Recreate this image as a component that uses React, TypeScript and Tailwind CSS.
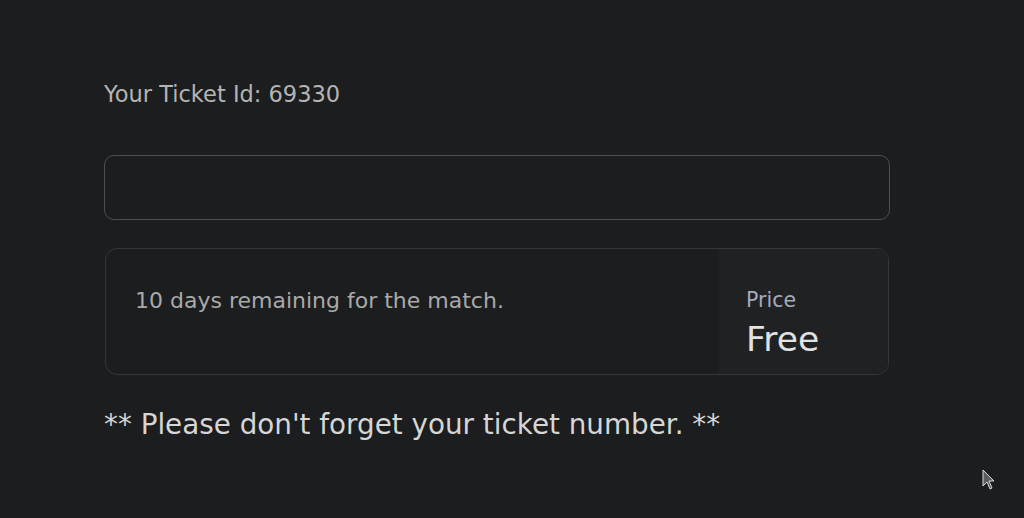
export default function App() {
  return (
    <div className="relative min-h-[518px] w-full bg-[#1b1d1e] font-['DejaVu_Sans',sans-serif]">
      <main className="w-[786px] ml-[104px] pt-[80px]">
        <p className="text-[22.5px] leading-[28px] text-[#b4b4b4]">Your Ticket Id: 69330</p>

        <input
          type="text"
          className="mt-[47px] block h-[65px] w-full rounded-[10px] border-[1.5px] border-[#4c4f52] bg-transparent px-4 text-[#ddd] outline-none"
        />

        <div className="mx-px mt-[28px] flex h-[127px] overflow-hidden rounded-[12px] border border-[#34373a]">
          <div className="flex flex-1 items-start px-[29px] pt-[38px]">
            <p className="text-[22px] leading-[28px] text-[#a9a9a9]">10 days remaining for the match.</p>
          </div>
          <div className="w-[169px] bg-[#202123] px-[27px] pt-[39px]">
            <p className="text-[20.5px] leading-[24px] text-[#a3abbd]">Price</p>
            <p className="mt-[7px] text-[34.5px] leading-[40px] text-[#e2e2e2]">Free</p>
          </div>
        </div>

        <p className="mt-[32px] text-[27.8px] leading-[36px] text-[#d6d6d6]">
          ** Please don't forget your ticket number. **
        </p>
      </main>

      <svg className="absolute left-[982px] top-[469px]" width="14" height="22" viewBox="0 0 14 22">
        <path d="M1 1 L1 17 L5 13 L8 20 L10 19 L7 12 L12 12 Z" fill="#5a5d60" stroke="#d8d8d8" strokeWidth="1" />
      </svg>
    </div>
  );
}
